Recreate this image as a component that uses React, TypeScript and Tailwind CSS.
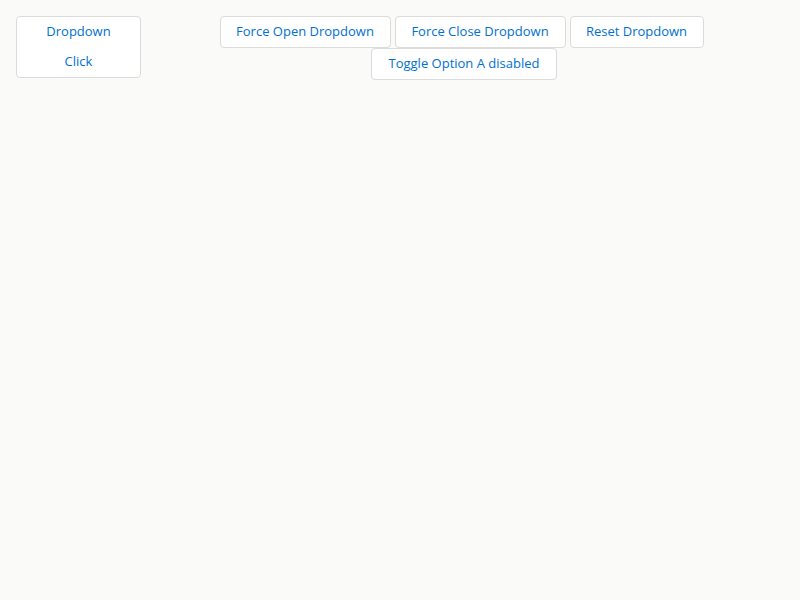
import React from "react";

const btn =
  "h-8 bg-white border border-[#dddbda] rounded text-[13px] text-[#0070d2] flex items-center justify-center shrink-0";

export default function App() {
  return (
    <div
      className="min-h-[600px] w-full bg-[#fafaf9] p-4 flex items-start"
      style={{ fontFamily: '"Open Sans", "Noto Sans", Arial, sans-serif' }}
    >
      <div className="w-[125px] h-[62px] bg-white border border-[#dddbda] rounded text-[13px] text-[#0070d2] flex flex-col shrink-0">
        <div className="h-[30px] flex items-center justify-center">Dropdown</div>
        <div className="h-[30px] flex items-center justify-center">Click</div>
      </div>
      <div className="flex-1 flex flex-wrap justify-center gap-x-1 pr-[2px]">
        <button className={`${btn} w-[171px]`}>Force Open Dropdown</button>
        <button className={`${btn} w-[171px]`}>Force Close Dropdown</button>
        <button className={`${btn} w-[134px]`}>Reset Dropdown</button>
        <button className={`${btn} w-[186px] ml-[5px]`}>Toggle Option A disabled</button>
      </div>
    </div>
  );
}
